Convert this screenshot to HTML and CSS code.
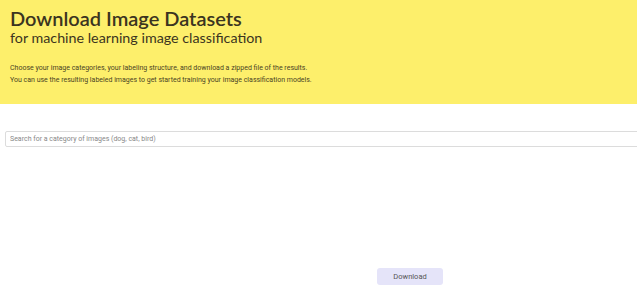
FILE: index.html
```html
<!DOCTYPE html>
<html lang="en">
<head>
  <meta charset="UTF-8" />
  <meta name="viewport" content="width=device-width, initial-scale=1" />
  <title>Download Image Datasets</title>
  <link rel="stylesheet" href="styles.css">
</head>
<body>
  <header class="hero">
    <h1>Download Image Datasets</h1>
    <h2>for machine learning image classification</h2>
    <p>Choose your image categories, your labeling structure, and download a zipped file of the results.<br>
    You can use the resulting labeled images to get started training your image classification models.</p>
  </header>

  <main class="content">
    <input class="search" type="text" placeholder="Search for a category of images (dog, cat, bird)" />
    <div class="actions">
      <button class="download-btn">Download</button>
    </div>
  </main>
</body>
</html>
```

FILE: styles.css
```css
* {
  box-sizing: border-box;
}

body {
  margin: 0;
  font-family: Roboto, Arial, sans-serif;
  background: #fff;
  overflow: hidden;
}

.hero {
  background: #fdef6b;
  color: #3b3420;
  padding: 7px 10px 0;
  height: 104px;
}

.hero h1 {
  font-family: Lato, sans-serif;
  font-weight: 600;
  font-size: 20px;
  margin: 0;
  line-height: 22px;
}

.hero h2 {
  font-family: Lato, sans-serif;
  font-weight: 400;
  font-size: 14.3px;
  margin: 1px 0 0;
  line-height: 16px;
}

.hero p {
  font-size: 7px;
  line-height: 12px;
  margin: 16px 0 0;
  color: #4a4424;
}

.content {
  padding: 27px 0 0 5px;
}

.search {
  display: block;
  width: 640px;
  height: 16px;
  border: 1px solid #dcdcdc;
  border-radius: 2px;
  padding: 0 4px;
  font-family: Roboto, Arial, sans-serif;
  font-size: 7px;
  color: #333;
  outline: none;
}

.search::placeholder {
  color: #888;
}

.actions {
  display: flex;
  justify-content: center;
  padding: 121px 0 0 178px;
}

.download-btn {
  width: 66px;
  height: 17px;
  border: none;
  border-radius: 3px;
  background: #e5e4f9;
  color: #555;
  font-family: Roboto, Arial, sans-serif;
  font-size: 7.5px;
  cursor: pointer;
}
```
